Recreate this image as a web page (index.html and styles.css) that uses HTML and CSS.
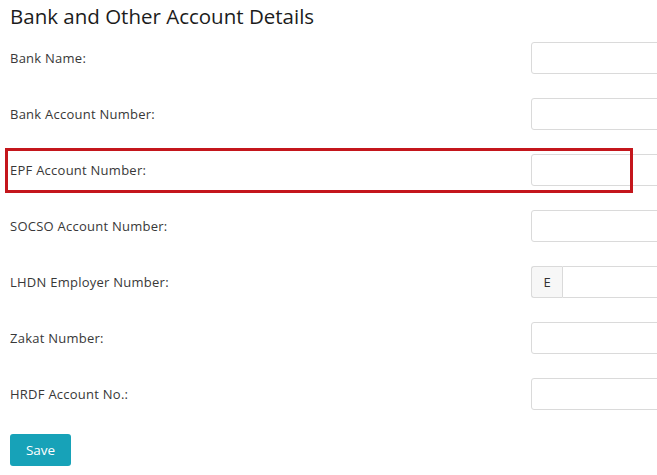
FILE: index.html
```html
<!DOCTYPE html>
<html>
<head>
<meta charset="utf-8">
<link rel="stylesheet" href="styles.css">
</head>
<body>
<div class="page">
  <h1 class="title">Bank and Other Account Details</h1>
  <form class="form">
    <div class="row"><label class="label">Bank Name:</label><div class="field"><input class="input" type="text"></div></div>
    <div class="row"><label class="label">Bank Account Number:</label><div class="field"><input class="input" type="text"></div></div>
    <div class="row row-hl"><span class="highlight"></span><label class="label">EPF Account Number:</label><div class="field"><input class="input" type="text"></div></div>
    <div class="row"><label class="label">SOCSO Account Number:</label><div class="field"><input class="input" type="text"></div></div>
    <div class="row"><label class="label">LHDN Employer Number:</label><div class="field"><span class="addon">E</span><input class="input input-group" type="text"></div></div>
    <div class="row"><label class="label">Zakat Number:</label><div class="field"><input class="input" type="text"></div></div>
    <div class="row"><label class="label">HRDF Account No.:</label><div class="field"><input class="input" type="text"></div></div>
    <button class="btn" type="button">Save</button>
  </form>
</div>
</body>
</html>
```

FILE: styles.css
```css
html, body {
  margin: 0;
  padding: 0;
  background: #fff;
}
.page {
  box-sizing: border-box;
  width: 657px;
  height: 475px;
  overflow: hidden;
  padding: 2px 0 0 10px;
  font-family: "Open Sans", "Noto Sans", sans-serif;
  color: #333;
}
.title {
  margin: 0 0 12px 0;
  font-size: 20.5px;
  line-height: 28px;
  font-weight: 400;
  color: #1c1c1c;
  white-space: nowrap;
}
.form {
  display: flex;
  flex-direction: column;
}
.row {
  display: flex;
  align-items: center;
  height: 32px;
  margin-bottom: 24px;
  position: relative;
}
.label {
  flex: none;
  width: 521px;
  font-size: 13px;
  letter-spacing: 0.25px;
  color: #383838;
  padding-top: 0;
}
.field {
  flex: none;
  display: flex;
  width: 140px;
  height: 32px;
}
.input {
  box-sizing: border-box;
  width: 140px;
  height: 32px;
  border: 1px solid #dadada;
  border-radius: 3px;
  margin: 0;
  padding: 0 8px;
  background: #fff;
}
.input-group {
  border-radius: 0 3px 3px 0;
  width: 110px;
}
.addon {
  box-sizing: border-box;
  flex: none;
  width: 31px;
  height: 32px;
  border: 1px solid #dadada;
  border-right: none;
  border-radius: 3px 0 0 3px;
  background: #f7f7f7;
  display: flex;
  align-items: center;
  justify-content: center;
  font-size: 13px;
  color: #333;
}
.highlight {
  position: absolute;
  left: -5px;
  top: -6px;
  width: 628px;
  height: 45px;
  box-sizing: border-box;
  border: 3px solid #c4161c;
  pointer-events: none;
}
.btn {
  align-self: flex-start;
  width: 61px;
  height: 32px;
  border: none;
  border-radius: 3px;
  background: #17a2b8;
  color: #fff;
  font-family: "Open Sans", "Noto Sans", sans-serif;
  font-size: 13.5px;
  padding: 0;
}
```
